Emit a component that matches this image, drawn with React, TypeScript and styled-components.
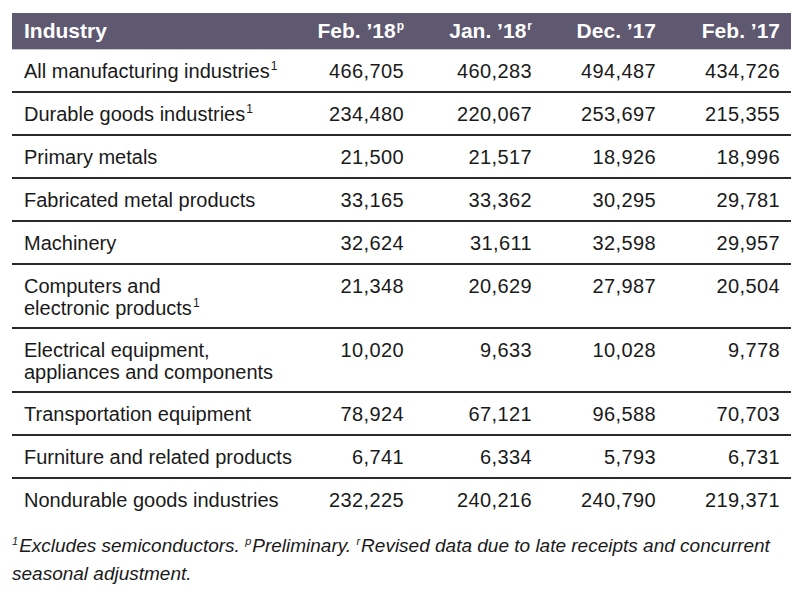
import React from "react";
import styled, { createGlobalStyle } from "styled-components";

const Global = createGlobalStyle`
  html, body { margin: 0; padding: 0; background: #ffffff; }
  body { font-family: "Liberation Sans", Arial, sans-serif; color: #1a1a1a; }
`;

const Page = styled.div`
  width: 800px;
  padding: 13px 9px 0 12px;
  box-sizing: border-box;
`;

const Table = styled.table`
  width: 779px;
  border-collapse: collapse;
  table-layout: fixed;
`;

const HeadCell = styled.th<{ $num?: boolean }>`
  background: #5e5870;
  color: #ffffff;
  font-weight: bold;
  font-size: 21px;
  height: 36px;
  padding: ${(p) => (p.$num ? "0 11px 0 0" : "0 12px")};
  text-align: ${(p) => (p.$num ? "right" : "left")};
  border-bottom: 1px solid #c9c7cf;
  white-space: nowrap;
  vertical-align: middle;
`;

const Row = styled.tr<{ $last?: boolean }>`
  border-bottom: ${(p) => (p.$last ? "none" : "2px solid #2a2a2a")};
`;

const Cell = styled.td<{ $num?: boolean; $tall?: boolean }>`
  font-size: 20px;
  line-height: 22px;
  padding: ${(p) => (p.$tall ? "10px 12px 8px" : "10px 12px 9px")};
  padding-right: ${(p) => (p.$num ? "11px" : "0")};
  height: ${(p) => (p.$tall ? "44px" : "22px")};
  text-align: ${(p) => (p.$num ? "right" : "left")};
  letter-spacing: ${(p) => (p.$num ? "0.4px" : "0")};
  vertical-align: top;
  white-space: nowrap;
  color: #1a1a1a;
`;

const Sup = styled.sup`
  font-size: 12px;
  line-height: 0;
  vertical-align: 8px;
  margin-left: 1px;
`;

const Note = styled.p`
  margin: 12px 0 0 0;
  font-style: italic;
  font-size: 19px;
  line-height: 28px;
  color: #1a1a1a;
  width: 779px;
`;

const NoteSup = styled.sup`
  font-size: 11px;
  line-height: 0;
  vertical-align: 7px;
  margin-right: 1px;
`;

type R = { name: React.ReactNode; vals: string[]; tall?: boolean };

const rows: R[] = [
  { name: <>All manufacturing industries<Sup>1</Sup></>, vals: ["466,705", "460,283", "494,487", "434,726"] },
  { name: <>Durable goods industries<Sup>1</Sup></>, vals: ["234,480", "220,067", "253,697", "215,355"] },
  { name: "Primary metals", vals: ["21,500", "21,517", "18,926", "18,996"] },
  { name: "Fabricated metal products", vals: ["33,165", "33,362", "30,295", "29,781"] },
  { name: "Machinery", vals: ["32,624", "31,611", "32,598", "29,957"] },
  { name: <>Computers and<br />electronic products<Sup>1</Sup></>, vals: ["21,348", "20,629", "27,987", "20,504"], tall: true },
  { name: <>Electrical equipment,<br />appliances and components</>, vals: ["10,020", "9,633", "10,028", "9,778"], tall: true },
  { name: "Transportation equipment", vals: ["78,924", "67,121", "96,588", "70,703"] },
  { name: "Furniture and related products", vals: ["6,741", "6,334", "5,793", "6,731"] },
  { name: "Nondurable goods industries", vals: ["232,225", "240,216", "240,790", "219,371"] },
];

export default function App() {
  return (
    <>
      <Global />
      <Page>
        <Table>
          <colgroup>
            <col style={{ width: 300 }} />
            <col style={{ width: 103 }} />
            <col style={{ width: 128 }} />
            <col style={{ width: 124 }} />
            <col style={{ width: 124 }} />
          </colgroup>
          <thead>
            <tr>
              <HeadCell>Industry</HeadCell>
              <HeadCell $num>Feb. ’18<Sup>p</Sup></HeadCell>
              <HeadCell $num>Jan. ’18<Sup>r</Sup></HeadCell>
              <HeadCell $num>Dec. ’17</HeadCell>
              <HeadCell $num>Feb. ’17</HeadCell>
            </tr>
          </thead>
          <tbody>
            {rows.map((r, i) => (
              <Row key={i} $last={i === rows.length - 1}>
                <Cell $tall={r.tall}>{r.name}</Cell>
                {r.vals.map((v, j) => (
                  <Cell key={j} $num $tall={r.tall}>{v}</Cell>
                ))}
              </Row>
            ))}
          </tbody>
        </Table>
        <Note>
          <NoteSup>1</NoteSup>Excludes semiconductors. <NoteSup>p</NoteSup>Preliminary. <NoteSup>r</NoteSup>Revised data due to late receipts and concurrent seasonal adjustment.
        </Note>
      </Page>
    </>
  );
}
